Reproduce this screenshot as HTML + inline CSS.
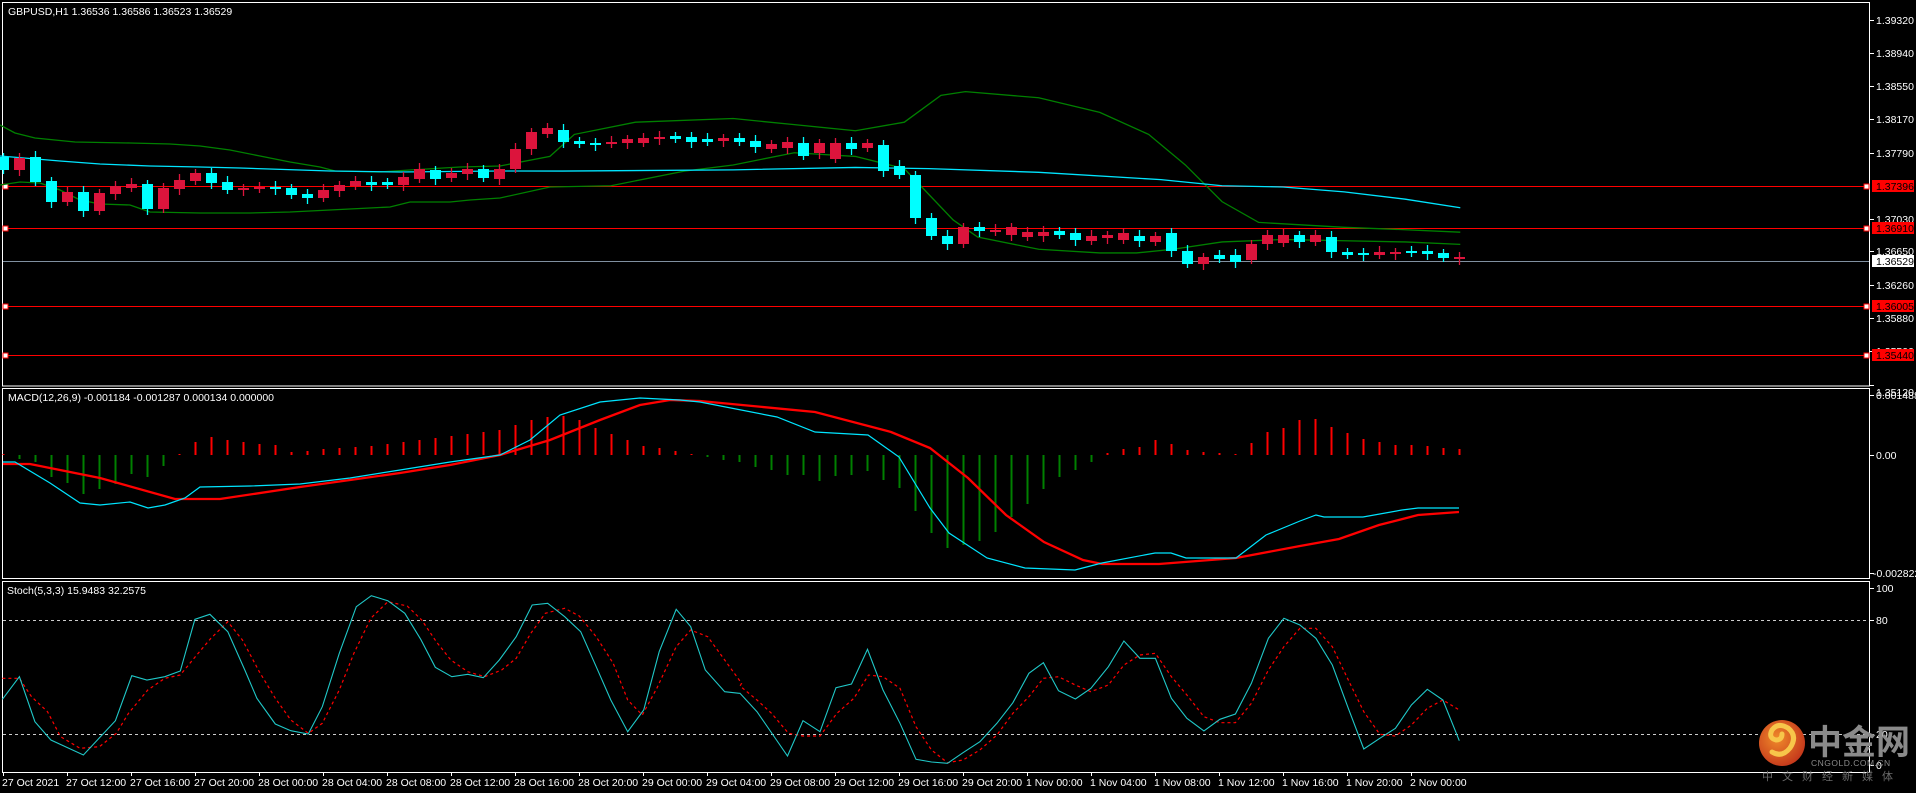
<!DOCTYPE html>
<html><head><meta charset="utf-8"><style>
html,body{margin:0;padding:0;background:#000;width:1916px;height:793px;overflow:hidden}
svg{display:block}
text{font-family:"Liberation Sans","Noto Sans CJK SC",sans-serif;font-size:10.5px;fill:#fff}
</style></head><body>
<svg id="s" width="1916" height="793" viewBox="0 0 1916 793" xmlns="http://www.w3.org/2000/svg">
<rect width="1916" height="793" fill="#000"/>
<g fill="none" stroke="#fff" stroke-width="1">
<rect x="2.5" y="2.5" width="1867" height="383.5"/>
<rect x="2.5" y="388.5" width="1867" height="190"/>
<rect x="2.5" y="581.5" width="1867" height="191"/>
</g>
<g id="dyn"></g>
<text x="8" y="15">GBPUSD,H1  1.36536 1.36586 1.36523 1.36529</text>
<text x="8" y="401">MACD(12,26,9) -0.001184 -0.001287 0.000134 0.000000</text>
<text x="7" y="594">Stoch(5,3,3) 15.9483 32.2575</text>
<defs><radialGradient id="lg" cx="0.4" cy="0.4" r="0.7"><stop offset="0" stop-color="#f08a2a"/><stop offset="1" stop-color="#c0301a"/></radialGradient></defs>
<circle cx="1782" cy="743" r="23" fill="url(#lg)"/>
<path d="M1772 752 q10 6 18 -4 q8 -12 -2 -20 q-10 -6 -16 2 q-4 8 4 10 q6 0 6 -6" fill="none" stroke="#f7c64a" stroke-width="5" stroke-linecap="round"/>
<text x="1808" y="754" style="font-size:34px;fill:#8a8a8a;font-weight:bold;font-family:'Noto Sans CJK SC',sans-serif">中金网</text>
<text x="1811" y="766" style="font-size:8.5px;fill:#8a8a8a;letter-spacing:0.5px">CNGOLD.COM.CN</text>
<text x="1762" y="780" style="font-size:11px;fill:#6a6a6a;letter-spacing:9px;font-family:'Noto Sans CJK SC',sans-serif">中文财经新媒体</text>
</svg>
<script>
var g=document.getElementById('dyn'),h='';
function X(i){return 3.5+16*i}
function pl(pts,col,w,extra){return '<polyline fill="none" stroke="'+col+'" stroke-width="'+w+'" '+(extra||'')+' points="'+pts.map(function(p){return p[0]+','+p[1]}).join(' ')+'"/>'}
function sc(a){return a.map(function(p){return [p[0]*1.222,p[1]*1.222]})}
[186,228,306,355].forEach(function(y){h+='<line x1="3" x2="1869" y1="'+y+'.5" y2="'+y+'.5" stroke="#ff0000"/>';
h+='<rect x="3" y="'+(y-2)+'" width="5" height="5" fill="#fff" stroke="#f00"/><rect x="1864" y="'+(y-2)+'" width="5" height="5" fill="#fff" stroke="#f00"/>';});
h+='<line x1="3" x2="1869" y1="261.5" y2="261.5" stroke="#8090a0"/>';
var up=[[0,125],[15,133],[35,138],[75,142],[130,143],[170,144],[200,146],[230,150],[260,156],[290,162],[320,167],[335,171],[380,172],[410,170],[460,167],[500,166]].concat(sc([[450,128],[470,110],[520,100],[600,97],[650,102],[700,107],[740,100],[770,78],[790,75],[850,80],[900,92],[940,110],[970,135],[1000,165],[1030,182],[1100,186],[1150,188],[1195,190]]));
var mid=[[0,156],[60,161],[100,164],[150,166],[200,167],[240,168],[300,170],[330,171],[400,172],[500,171]].concat(sc([[460,140],[600,139],[700,137],[760,138],[850,141],[950,147],[1000,152],[1050,153],[1100,157],[1150,163],[1195,170]]));
var lo=[[0,185],[20,182],[40,183],[60,190],[80,200],[100,204],[130,205],[150,212],[200,213],[250,213],[290,212],[330,210],[390,207],[410,202],[450,202],[470,200],[500,198]].concat(sc([[450,153],[500,152],[560,140],[600,135],[650,125],[700,128],[740,138],[780,180],[800,194],[850,204],[900,207],[930,207],[960,204],[1000,198],[1050,196],[1100,197],[1150,198],[1195,200]]));
h+=pl(up,'#008000',1.3)+pl(lo,'#008000',1.3)+pl(mid,'#00e5ff',1.3);
var A=[['c',157,170],['r',158,170],['c',157,182],['c',181,202],['r',192,202],['c',192,211],['r',193,211],['r',186,194],['r',184,188],['c',184,209],['r',188,209],['r',180,189],['r',173,181],['c',173,183],['c',182,190],['r',188,190],['r',187,189],['c',187,189],['c',188,195],['c',194,198],['r',190,198],['r',185,191],['r',181,186],['c',182,185],['c',182,185],['r',177,185],['r',169,179],['c',170,179],['r',173,178],['r',169,174],['c',169,178],['r',169,179]];
var B=[['r',122,138],['r',108,122],['r',105,110],['c',106,116],['c',115,118],['c',117,119],['r',116,118],['r',114,117],['r',113,117],['r',112,114],['c',111,114],['c',112,116],['c',114,116],['r',113,115],['c',113,116],['c',115,120],['r',118,122],['r',116,121],['c',117,128],['r',117,125],['r',117,130],['c',117,122],['r',117,121],['c',119,140],['c',136,143],['c',143,178],['c',178,193],['c',193,200],['r',186,200],['c',186,189],['r',188,190],['r',186,192],['r',190,194],['r',190,193],['c',189,192],['c',191,196],['r',193,197],['r',192,195],['r',191,196],['c',193,197],['r',193,198],['c',191,205],['c',205,216],['r',210,216],['c',209,212],['c',209,214],['r',200,213],['r',192,200],['r',192,199],['c',192,198],['r',192,198],['c',194,206],['c',206,209],['c',207,209],['r',206,209],['r',206,208],['c',205,207],['c',205,208],['c',207,211],['r',210,212]];
B.forEach(function(b){A.push([b[0],Math.round(b[1]*1.222),Math.round(b[2]*1.222)])});
A.forEach(function(c,i){var x=X(i),col=c[0]=='c'?'#00ffff':'#dc143c',t=c[1],b=Math.max(c[2],t+2);
h+='<line x1="'+x+'" x2="'+x+'" y1="'+(t-4-(i%3))+'" y2="'+(b+4+(i%2)*2)+'" stroke="'+col+'" stroke-width="1.3"/>';
h+='<rect x="'+(x-5.5)+'" y="'+t+'" width="11" height="'+(b-t)+'" fill="'+col+'"/>';});
[[20,'1.39320'],[53,'1.38940'],[86,'1.38550'],[119,'1.38170'],[153,'1.37790'],[219,'1.37030'],[251,'1.36650'],[285,'1.36260'],[318,'1.35880'],[351,'1.35500'],[385,'1.35120']].forEach(function(p){
h+='<line x1="1870" x2="1874" y1="'+p[0]+'.5" y2="'+p[0]+'.5" stroke="#fff"/><text x="1876" y="'+(p[0]+4+(p[0]==385?7:0))+'">'+p[1]+'</text>';});
[[186,'1.37396'],[228,'1.36910'],[306,'1.36005'],[355,'1.35440']].forEach(function(p){
h+='<rect x="1872" y="'+(p[0]-6)+'" width="42" height="12" fill="#ff0000"/><text x="1876" y="'+(p[0]+4)+'" style="fill:#000">'+p[1]+'</text>';});
h+='<rect x="1872" y="255" width="42" height="12" fill="#fff"/><text x="1876" y="265" style="fill:#000">1.36529</text>';
var hp=[[3.5,455],[35,462],[51,477],[67,483],[83,494],[99,489],[115,484],[131,474],[147,477],[163,467],[171,455],[179,454],[195,442],[211,437],[227,440],[243,442],[259,444],[275,445],[291,452],[340,448],[380,445],[420,440],[460,435],[500,430],[530,420],[560,415],[575,418],[600,430],[640,445],[680,452],[700,455],[707,457],[723,460],[739,462],[755,467],[771,470],[787,475],[803,475],[819,481],[835,476],[851,475],[867,471],[883,480],[899,487],[915,510],[931,532],[947,548],[963,545],[979,541],[995,532],[1011,517],[1027,504],[1043,489],[1059,477],[1075,470],[1091,462],[1100,455],[1107,453],[1123,449],[1139,447],[1155,440],[1171,444],[1187,450],[1203,452],[1219,453],[1235,454],[1251,443],[1267,432],[1283,428],[1299,420],[1315,419],[1331,427],[1347,433],[1363,439],[1379,442],[1395,445],[1411,445],[1427,446],[1443,448],[1459,449]];
function interp(pts,x){for(var k=0;k<pts.length-1;k++){if(x>=pts[k][0]&&x<=pts[k+1][0]){var t=(x-pts[k][0])/(pts[k+1][0]-pts[k][0]);return pts[k][1]+t*(pts[k+1][1]-pts[k][1]);}}return pts[pts.length-1][1];}
for(var i=0;i<=91;i++){var x=X(i),y=Math.round(interp(hp,x));if(Math.abs(y-455)<1)y=454;var col=y<455?'#ff0000':'#008000';
h+='<line x1="'+x+'" x2="'+x+'" y1="455" y2="'+y+'" stroke="'+col+'" stroke-width="2"/>';}
var mr=[[3,464],[30,464],[100,478],[175,499],[220,499],[300,487],[350,480],[400,473],[450,465],[500,455],[550,440],[600,420],[640,405],[670,400],[700,401],[815,412],[891,432],[930,448],[968,478],[1006,515],[1044,542],[1083,560],[1102,564],[1159,564],[1236,558],[1300,546],[1339,539],[1379,525],[1418,515],[1459,512]];
var mc=[[3,462],[15,462],[50,483],[80,503],[100,505],[130,502],[148,508],[165,505],[185,498],[200,487],[250,486],[300,484],[350,478],[400,470],[450,462],[500,455],[530,440],[560,415],[600,402],[640,398],[680,400],[700,402],[777,417],[815,432],[868,435],[899,457],[930,508],[949,533],[987,558],[1025,568],[1075,570],[1102,563],[1155,553],[1171,553],[1186,558],[1236,558],[1266,535],[1300,521],[1316,515],[1324,517],[1363,517],[1402,510],[1418,508],[1459,508]];
h+=pl(mr,'#ff0000',2.3)+pl(mc,'#00e5ff',1.2);
[[395,'0.001488'],[455,'0.00'],[573,'-0.002822']].forEach(function(p){h+='<line x1="1870" x2="1874" y1="'+p[0]+'.5" y2="'+p[0]+'.5" stroke="#fff"/><text x="'+(p[1][0]=='-'?1873:1876)+'" y="'+(p[0]+4)+'">'+p[1]+'</text>';});
h+='<line x1="3" x2="1869" y1="620.5" y2="620.5" stroke="#ccc" stroke-dasharray="3,3"/><line x1="3" x2="1869" y1="734.5" y2="734.5" stroke="#ccc" stroke-dasharray="3,3"/>';
function z8(a,ox){return a.map(function(p){return [(ox+p[0]/2.063).toFixed(1),(580+p[1]/3).toFixed(1)]})}
var c8=[[5,358],[40,290],[72,425],[105,480],[172,525],[238,422],[272,287],[303,300],[340,290],[372,273],[402,118],[433,103],[470,155],[505,270],[530,355],[568,432],[600,452],[636,462],[665,380],[700,220],[735,80],[766,47],[800,62],[835,100],[868,178],[898,262],[932,290],[965,283],[997,293],[1030,240],[1065,170],[1098,75],[1130,70],[1165,110],[1198,155],[1230,260],[1260,360],[1295,455],[1328,390],[1360,215],[1395,88],[1425,140],[1455,270],[1495,335],[1525,340]];
var c9=[[0,340],[35,395],[98,528],[130,422],[165,455],[198,323],[230,312],[263,208],[295,330],[330,430],[363,538],[395,546],[428,550],[460,518],[495,485],[530,430],[563,368],[596,280],[626,248],[657,332],[692,357],[724,325],[760,260],[792,183],[825,235],[857,235],[890,355],[922,415],[957,453],[990,418],[1022,402],[1055,310],[1090,175],[1122,115],[1155,135],[1188,175],[1222,255],[1255,385],[1287,507],[1320,475],[1352,445],[1385,375],[1418,328],[1450,360],[1484,482]];
var r8=[[5,295],[40,295],[65,350],[98,395],[125,470],[165,505],[205,500],[240,460],[265,400],[305,330],[340,295],[372,285],[403,230],[435,175],[470,125],[500,180],[535,275],[568,355],[600,420],[636,460],[665,430],[700,330],[730,220],[765,115],[800,65],[840,78],[870,120],[900,185],[930,240],[965,275],[1000,290],[1035,270],[1065,235],[1095,160],[1125,100],[1165,85],[1195,108],[1230,170],[1265,250],[1295,360],[1325,405],[1355,325],[1395,200],[1425,150],[1460,170],[1495,240],[1530,310]];
var r9=[[0,318],[35,360],[65,400],[100,460],[130,468],[165,468],[200,400],[235,355],[265,285],[295,290],[330,325],[363,440],[395,510],[428,548],[460,540],[495,510],[530,465],[563,400],[596,350],[626,295],[657,290],[692,315],[724,335],[760,315],[792,255],[825,225],[857,220],[890,290],[922,345],[957,410],[990,428],[1022,428],[1055,370],[1090,270],[1122,200],[1155,145],[1188,145],[1222,200],[1255,300],[1287,395],[1320,463],[1352,468],[1385,435],[1418,385],[1450,360],[1484,390]];
h+=pl(z8(r8,0).concat(z8(r9,740)),'#ff0000',1.2,'stroke-dasharray="3,3"');
h+=pl(z8(c8,0).concat(z8(c9,740)),'#20c8c8',1.1);
[[588,'100'],[620,'80'],[734,'20'],[765,'0']].forEach(function(p){h+='<line x1="1870" x2="1874" y1="'+p[0]+'.5" y2="'+p[0]+'.5" stroke="#fff"/><text x="1876" y="'+(p[0]+4)+'">'+p[1]+'</text>';});
var L=["27 Oct 2021","27 Oct 12:00","27 Oct 16:00","27 Oct 20:00","28 Oct 00:00","28 Oct 04:00","28 Oct 08:00","28 Oct 12:00","28 Oct 16:00","28 Oct 20:00","29 Oct 00:00","29 Oct 04:00","29 Oct 08:00","29 Oct 12:00","29 Oct 16:00","29 Oct 20:00","1 Nov 00:00","1 Nov 04:00","1 Nov 08:00","1 Nov 12:00","1 Nov 16:00","1 Nov 20:00","2 Nov 00:00"];
L.forEach(function(t,k){var x=3+64*k;h+='<line x1="'+x+'.5" x2="'+x+'.5" y1="772" y2="776" stroke="#fff"/><text x="'+(x-1)+'" y="786">'+t+'</text>';});
g.innerHTML=h;
</script>
</body></html>
